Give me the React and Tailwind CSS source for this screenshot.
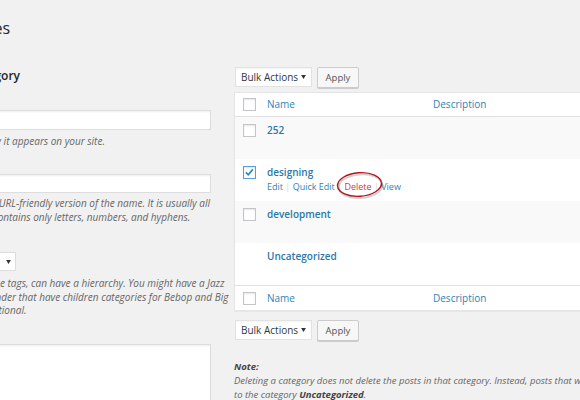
import React from 'react';

const Checkbox = ({ checked }) => (
  <span
    className={
      'block w-[13px] h-[13px] bg-white border shadow-[inset_0_1px_2px_rgba(0,0,0,0.1)] ' +
      (checked ? 'border-[#5b9dd9]' : 'border-[#c3c6c9]')
    }
  >
    {checked && (
      <svg viewBox="0 0 13 13" className="w-[11px] h-[11px]">
        <path d="M2.2 6.4 L5 9.2 L10.4 2.8" fill="none" stroke="#1e8cbe" strokeWidth="1.9" />
      </svg>
    )}
  </span>
);

const BulkSelect = () => (
  <div className="w-[77px] h-[20px] bg-white border border-[#e2e2e2] shadow-[inset_0_1px_2px_rgba(0,0,0,0.05)] flex items-center justify-between pl-[5px] pr-[5px] text-[10px] text-[#32373c] leading-none">
    <span>Bulk Actions</span>
    <svg viewBox="0 0 6 5" className="w-[5px] h-[4px]">
      <path d="M0 0 H6 L3 5 Z" fill="#333" />
    </svg>
  </div>
);

const Apply = () => (
  <div className="w-[42px] h-[21px] bg-[#f7f7f7] border border-[#cccccc] rounded-[2px] shadow-[0_1px_0_#cccccc] flex items-center justify-center text-[9.5px] text-[#555] leading-none">
    Apply
  </div>
);

const Tablenav = () => (
  <div className="flex items-start gap-[5px] h-[22px] pl-[1px]">
    <BulkSelect />
    <Apply />
  </div>
);

const HeadRow = ({ top }) => (
  <div
    className={
      'flex items-center bg-white text-[10px] text-[#2e84b6] ' +
      (top ? 'h-[24px] border-b border-[#e1e1e1]' : 'h-[25px] border-t border-[#e1e1e1]')
    }
  >
    <div className="w-[32px] pl-[8px] shrink-0">
      <Checkbox />
    </div>
    <div className="w-[166px] shrink-0">Name</div>
    <div>Description</div>
  </div>
);

const Row = ({ name, stripe, check, checked, actions }) => (
  <div className={'relative flex h-[42px] pt-[6px] ' + (stripe ? 'bg-[#f9f9f9]' : 'bg-white')}>
    <div className="w-[32px] pl-[8px] pt-[1px] shrink-0">{check && <Checkbox checked={checked} />}</div>
    <div className="shrink-0">
      <div className="text-[10px] font-semibold leading-[15px] text-[#2a78a8]">{name}</div>
      {actions && (
        <div className="text-[9px] leading-[14px] whitespace-nowrap text-[#2e84b6]">
          <span>Edit</span>
          <span className="text-[#d6d6d6]"> | </span>
          <span>Quick Edit</span>
          <span className="text-[#d6d6d6]"> | </span>
          <span className="text-[#d23a41]">Delete</span>
          <span className="text-[#d6d6d6]"> | </span>
          <span>View</span>
        </div>
      )}
    </div>
    {actions && (
      <svg className="absolute left-[100px] top-[11px] w-[52px] h-[32px]" viewBox="0 0 52 32">
        <ellipse cx="25.5" cy="16.2" rx="22" ry="11.8" transform="rotate(-4 25.5 16.2)" fill="none" stroke="rgba(0,0,0,0.18)" strokeWidth="2" />
        <ellipse cx="24.5" cy="14.5" rx="22" ry="11.8" transform="rotate(-4 24.5 14.5)" fill="none" stroke="#b3141d" strokeWidth="1.4" />
      </svg>
    )}
  </div>
);

const Label = ({ children, className }) => (
  <label className={'block leading-[14px] text-[10px] text-[#23282d] ' + className}>{children}</label>
);

const Desc = ({ lines, lh = 'leading-[14px]', className }) => (
  <p className={'italic text-[10px] text-[#666] whitespace-nowrap ' + lh + ' ' + className}>
    {lines.map((l) => (
      <span key={l} className="block">
        {l}
      </span>
    ))}
  </p>
);

const Field = ({ className }) => (
  <div className={'bg-white border border-[#dddddd] shadow-[inset_0_1px_2px_rgba(0,0,0,0.07)] ' + className} />
);

export default function App() {
  return (
    <div className="w-[580px] h-[400px] overflow-hidden bg-[#f1f1f1] font-['Open_Sans','Liberation_Sans',sans-serif] text-[#444]">
      <div className="h-[60px] pt-[18px]">
        <h1 className="ml-[-69px] text-[16px] leading-[20px] text-[#23282d] whitespace-nowrap">Categories</h1>
      </div>

      <div className="flex">
        {/* left: add form */}
        <div className="shrink-0 w-[284px] ml-[-73px]">
          <h2 className="mt-[8px] ml-[-14px] leading-[16px] text-[12px] font-semibold text-[#23282d] whitespace-nowrap">
            Add New Category
          </h2>
          <Label className="mt-[12px]">Name</Label>
          <Field className="h-[20px]" />
          <Desc className="mt-[4px]" lines={['The name is how it appears on your site.']} />
          <Label className="mt-[12px]">Slug</Label>
          <Field className="h-[19px]" />
          <Desc
            className="mt-[3px]"
            lines={[
              'The \u201cslug\u201d is the URL-friendly version of the name. It is usually all',
              'lowercase and contains only letters, numbers, and hyphens.',
            ]}
          />
          <Label className="mt-[14px]">Parent</Label>
          <div className="w-[89px] h-[19px] bg-white border border-[#dddddd] flex items-center justify-between pl-[5px] pr-[4px] text-[10px] text-[#32373c]">
            <span>None</span>
            <svg viewBox="0 0 6 5" className="w-[5px] h-[4px]">
              <path d="M0 0 H6 L3 5 Z" fill="#333" />
            </svg>
          </div>
          <Desc
            className="mt-[6px]"
            lh="leading-[13.5px]"
            lines={[
              'Categories, unlike tags, can have a hierarchy. You might have a Jazz',
              'category, and under that have children categories for Bebop and Big',
              'Band. Totally optional.',
            ]}
          />
          <Label className="mt-[12.5px]">Description</Label>
          <Field className="h-[80px]" />
        </div>

        {/* right: list table */}
        <div className="shrink-0 w-[620px] ml-[23px]">
          <div className="mt-[7px]">
            <Tablenav />
          </div>
          <div className="mt-[3px] bg-white border border-[#e5e5e5] shadow-[0_1px_1px_rgba(0,0,0,0.04)]">
            <HeadRow top />
            <Row name="252" stripe check />
            <Row name="designing" check checked actions />
            <Row name="development" stripe check />
            <Row name="Uncategorized" />
            <HeadRow />
          </div>
          <div className="mt-[9px]">
            <Tablenav />
          </div>
          <p className="mt-[18px] italic text-[9.5px] leading-[14px] text-[#666] whitespace-nowrap">
            <strong className="block text-[#444]">Note:</strong>
            <span className="block">
              Deleting a category does not delete the posts in that category. Instead, posts that were only assigned to the deleted category are set
            </span>
            <span className="block">
              to the category <strong className="text-[#444]">Uncategorized</strong>.
            </span>
          </p>
        </div>
      </div>
    </div>
  );
}
